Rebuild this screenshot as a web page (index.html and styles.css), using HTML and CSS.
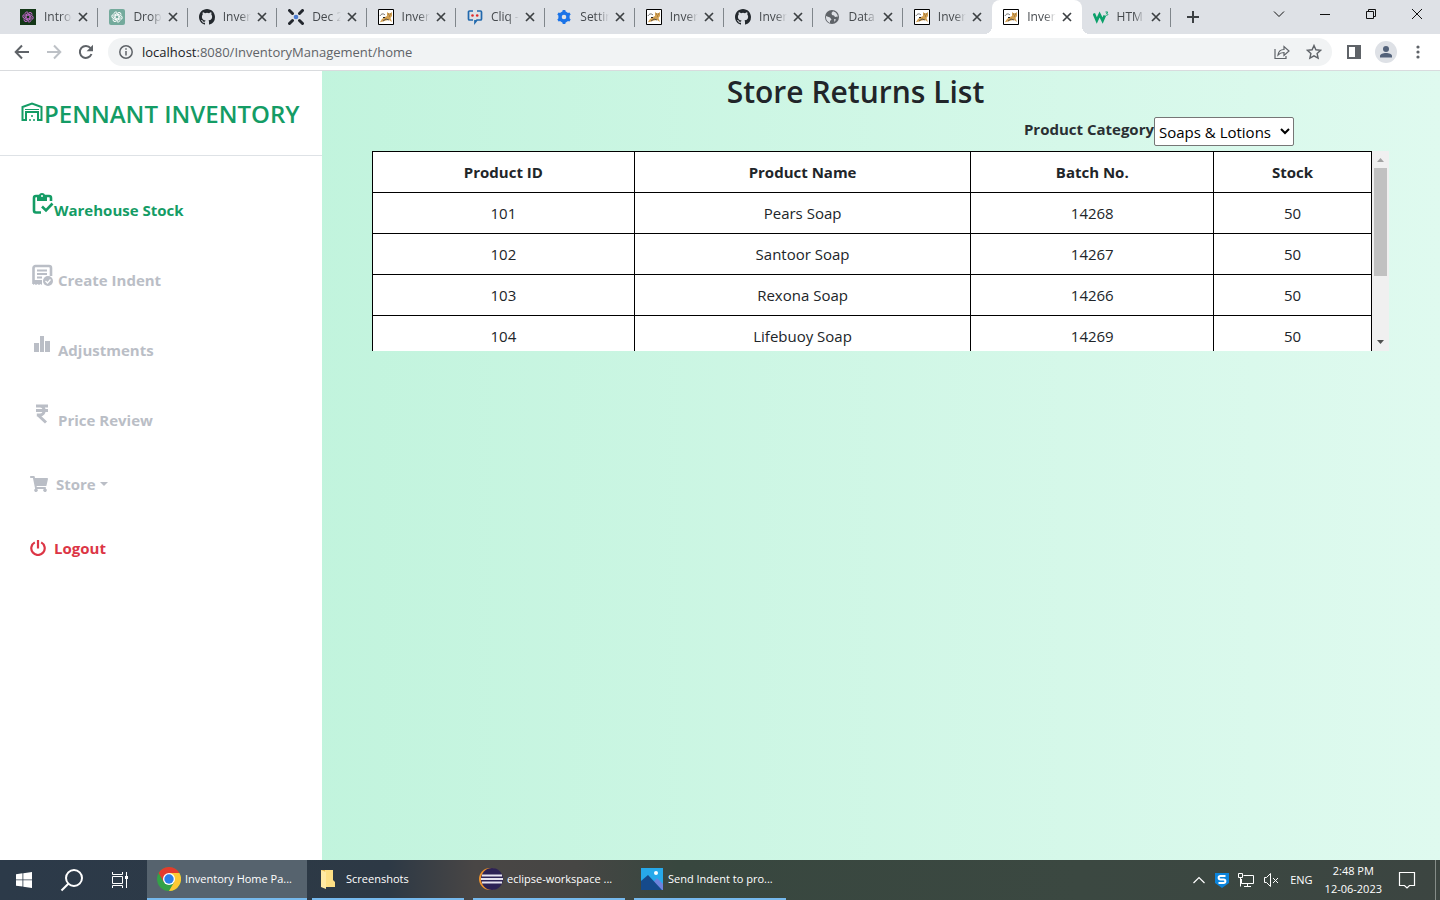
FILE: index.html
```html
<!DOCTYPE html>
<html lang="en">
<head>
<meta charset="utf-8">
<title>Inventory Home Page</title>
<link rel="stylesheet" href="styles.css">
</head>
<body>
<svg class="defs" aria-hidden="true">
  <symbol id="x" viewBox="0 0 10 10"><path d="M1 1l8 8M9 1l-8 8" fill="none" stroke="#3c4043" stroke-width="1.7"/></symbol>
  <symbol id="knot" viewBox="0 0 16 16"><g fill="none" stroke="currentColor" stroke-width="1.2"><path id="petal" d="M8 2.2C5.8 1 3.9 2.800 4.300 5v3.400l3.700 2.200"/><use href="#petal" transform="rotate(60 8 8)"/><use href="#petal" transform="rotate(120 8 8)"/><use href="#petal" transform="rotate(180 8 8)"/><use href="#petal" transform="rotate(240 8 8)"/><use href="#petal" transform="rotate(300 8 8)"/></g></symbol>
  <symbol id="github" viewBox="0 0 16 16"><path fill="#24292e" d="M8 0C3.580 0 0 3.580 0 8c0 3.540 2.290 6.530 5.470 7.590.4.070.55-.17.55-.38 0-.19-.01-.82-.01-1.490-2.010.37-2.530-.49-2.690-.94-.09-.23-.48-.94-.82-1.130-.28-.15-.68-.52-.01-.53.63-.01 1.080.58 1.230.82.72 1.210 1.870.87 2.330.66.070-.52.28-.87.51-1.070-1.780-.2-3.640-.89-3.640-3.950 0-.87.31-1.590.82-2.150-.08-.2-.36-1.020.08-2.120 0 0 .67-.21 2.200.82a7.600 7.600 0 014 0c1.530-1.040 2.200-.82 2.200-.82.44 1.100.16 1.920.08 2.120.51.56.82 1.270.82 2.150 0 3.070-1.870 3.750-3.650 3.950.29.25.54.73.54 1.480 0 1.070-.01 1.930-.01 2.200 0 .21.15.46.55.38A8 8 0 0016 8c0-4.420-3.580-8-8-8z"/></symbol>
  <symbol id="cat" viewBox="0 0 16 16"><path fill="#fff" stroke="#000" d="M.5.5h15v15H.5z"/><path d="M2 13l2-3 3-2 2-1 0-4 1.500 1.200h2L14 3v4l-1.500 2 1.500 4-3-2-3 .5-3 1-3 .8z" fill="#d2a052"/><path d="M2 7c1-2 3-3 5-1M5 12l3-2 3 1" fill="none" stroke="#444" stroke-width=".8"/><path d="M5 8h2v1H5z" fill="#222"/><path d="M10 5h1M12 5h1M11 7h1" stroke="#8a6430"/></symbol>
</svg>

<header class="browser">
  <div class="tabstrip">
    <div class="tabs">
      <div class="tab"><svg class="fav" viewBox="0 0 16 16"><path fill="#143718" d="M0 0h16v16H0z"/><use href="#knot" color="#c469cf" x="1.500" y="1.500" width="13" height="13"/></svg><span class="label">Introd</span><button class="close" aria-label="Close tab"><svg><use href="#x"/></svg></button></div>
      <div class="tab"><svg class="fav" viewBox="0 0 16 16"><rect width="16" height="16" rx="2" fill="#74aa9c"/><use href="#knot" color="#fff" x="1.500" y="1.500" width="13" height="13"/></svg><span class="label">Drop</span><button class="close" aria-label="Close tab"><svg><use href="#x"/></svg></button></div>
      <div class="tab"><svg class="fav"><use href="#github"/></svg><span class="label">Inver</span><button class="close" aria-label="Close tab"><svg><use href="#x"/></svg></button></div>
      <div class="tab"><svg class="fav" viewBox="0 0 16 16"><path d="M1.500 1.500l3 3M14.500 1.500l-3 3M1.500 14.500l3-3M14.500 14.500l-3-3" stroke="#23272e" stroke-width="3" stroke-linecap="round"/><circle cx="8" cy="8" r="2.300" fill="#4b7bd0"/></svg><span class="label">Dec 2</span><button class="close" aria-label="Close tab"><svg><use href="#x"/></svg></button></div>
      <div class="tab"><svg class="fav"><use href="#cat"/></svg><span class="label">Inver</span><button class="close" aria-label="Close tab"><svg><use href="#x"/></svg></button></div>
      <div class="tab"><svg class="fav" viewBox="0 0 16 16"><path d="M6 2H2.500a1 1 0 00-1 1v7a1 1 0 001 1H6M10 2h3.500a1 1 0 011 1v7a1 1 0 01-1 1H10l-2 2.500V11" fill="none" stroke="#2269ad" stroke-width="1.700"/><circle cx="5.500" cy="6.500" r="1.300" fill="#e02b2b"/><circle cx="10.200" cy="6.500" r="1.300" fill="#e02b2b"/></svg><span class="label">Cliq -</span><button class="close" aria-label="Close tab"><svg><use href="#x"/></svg></button></div>
      <div class="tab"><svg class="fav" viewBox="0 0 16 16"><circle cx="8" cy="8" r="4" fill="none" stroke="#1a73e8" stroke-width="3.400"/><path d="M6.700 1h2.600l.5 2.500H6.200zM6.700 15h2.600l.5-2.500H6.200zM1.300 5.600l1.300-2.200L5 4.200 3.200 7.300zM14.700 5.600l-1.300-2.200-2.400.8 1.800 3.100zM1.300 10.400l1.300 2.200 2.400-.8-1.800-3.100zM14.700 10.400l-1.300 2.200-2.400-.8 1.800-3.100z" fill="#1a73e8"/></svg><span class="label">Settin</span><button class="close" aria-label="Close tab"><svg><use href="#x"/></svg></button></div>
      <div class="tab"><svg class="fav"><use href="#cat"/></svg><span class="label">Inver</span><button class="close" aria-label="Close tab"><svg><use href="#x"/></svg></button></div>
      <div class="tab"><svg class="fav"><use href="#github"/></svg><span class="label">Inver</span><button class="close" aria-label="Close tab"><svg><use href="#x"/></svg></button></div>
      <div class="tab"><svg class="fav" viewBox="0 0 16 16"><circle cx="8" cy="8" r="7" fill="#5f6368"/><path d="M2 7l4 1.500 1.500 2L6 12v2C3.500 13 2 11 2 8.500zM9 2.200L7.500 4 8 6l2 .5 1 1.500 2.500-.5L13.800 9c.4-3-1.300-5.800-4.800-6.800zM10 10l2 .5-1.500 2.500z" fill="#dee1e6"/></svg><span class="label">Data</span><button class="close" aria-label="Close tab"><svg><use href="#x"/></svg></button></div>
      <div class="tab no-sep"><svg class="fav"><use href="#cat"/></svg><span class="label">Inver</span><button class="close" aria-label="Close tab"><svg><use href="#x"/></svg></button></div>
      <div class="tab active"><svg class="fav"><use href="#cat"/></svg><span class="label">Inver</span><button class="close" aria-label="Close tab"><svg><use href="#x"/></svg></button></div>
      <div class="tab"><svg class="fav" viewBox="0 0 16 16"><path d="M.8 4.500l3 7 2.800-6 3 6 2.200-5" fill="none" stroke="#0ba06a" stroke-width="2.700"/><path d="M12.500 3h2.200l-1.200 1.500c2.200 0 1.600 2.300-.8 1.700" fill="none" stroke="#0ba06a"/></svg><span class="label">HTM</span><button class="close" aria-label="Close tab"><svg><use href="#x"/></svg></button></div>
    </div>
    <button class="newtab" aria-label="New tab"><svg width="12" height="12" viewBox="0 0 12 12"><path d="M6 0v12M0 6h12" stroke="#3c4043" stroke-width="2"/></svg></button>
    <div class="winctl">
      <button aria-label="Search tabs"><svg width="12" height="12" viewBox="0 0 12 12"><path d="M1 3.500l5 5 5-5"/></svg></button>
      <button aria-label="Minimize"><svg width="12" height="12" viewBox="0 0 12 12"><path d="M1 6.500h10"/></svg></button>
      <button aria-label="Restore"><svg width="12" height="12" viewBox="0 0 12 12"><path d="M1.500 3.500h7v7h-7zM3.500 3.500v-2h7v7h-2"/></svg></button>
      <button aria-label="Close"><svg width="12" height="12" viewBox="0 0 12 12"><path d="M1 1l10 10M11 1L1 11"/></svg></button>
    </div>
  </div>
  <div class="toolbar">
    <button aria-label="Back"><svg viewBox="0 0 16 16"><path d="M15 8H2M8 1.500L1.700 8 8 14.500" fill="none" stroke="#5f6368" stroke-width="2"/></svg></button>
    <button aria-label="Forward"><svg viewBox="0 0 16 16"><path d="M1 8h13M8 1.500L14.300 8 8 14.500" fill="none" stroke="#bdc1c6" stroke-width="2"/></svg></button>
    <button aria-label="Reload"><svg viewBox="0 0 16 16"><path d="M13.500 10A6 6 0 1112.600 4.200" fill="none" stroke="#5f6368" stroke-width="2"/><path d="M15 .8v6.400H8.600z" fill="#5f6368"/></svg></button>
    <div class="omnibox">
      <svg class="ic14" viewBox="0 0 14 14"><circle cx="7" cy="7" r="6.200" fill="none" stroke="#5f6368" stroke-width="1.500"/><path d="M7 6v4.500M7 3.300v1.500" stroke="#5f6368" stroke-width="1.500"/></svg>
      <div class="url"><b>localhost</b>:8080/InventoryManagement/home</div>
      <button aria-label="Share"><svg viewBox="0 0 16 16"><path d="M1 5v9.500h11V12M4 11c.5-4 3-5.500 6-5.500V2.500L15 7l-5 4.500v-3c-3 0-4.500.8-6 2.500z" fill="none" stroke="#5f6368" stroke-width="1.200"/></svg></button>
      <button aria-label="Bookmark"><svg viewBox="0 0 16 16"><path d="M8 1.500l1.900 4.300 4.800.5-3.600 3.200 1 4.700L8 11.800l-4.100 2.400 1-4.700L1.300 6.300l4.800-.5z" fill="none" stroke="#5f6368" stroke-width="1.400"/></svg></button>
    </div>
    <button aria-label="Side panel"><svg viewBox="0 0 16 16"><path d="M1 1h14v14H1zM3 3v10h6V3z" fill="#5f6368" fill-rule="evenodd"/></svg></button>
    <button class="avatar" aria-label="Profile"><svg viewBox="0 0 22 22"><circle cx="11" cy="11" r="11" fill="#dee1e6"/><circle cx="11" cy="8" r="3" fill="#53627a"/><path d="M5 16.500v-1.500c0-4 12-4 12 0v1.500z" fill="#53627a"/></svg></button>
    <button aria-label="Menu"><svg viewBox="0 0 16 16" fill="#5f6368"><circle cx="8" cy="3" r="1.600"/><circle cx="8" cy="8" r="1.600"/><circle cx="8" cy="13" r="1.600"/></svg></button>
  </div>
</header>

<div class="app">
  <aside class="sidebar">
    <h1 class="brand"><svg width="24" height="24" viewBox="0 0 24 24" fill="none" stroke="currentColor" stroke-width="2"><path d="M2.500 18V5L12 1.500 21.500 5v13H18v-8H6v8z"/><path d="M5 7.500h14" stroke-width="1"/><path d="M11 14h2M9 18h2M13 18h2" stroke-width="1.500"/></svg>PENNANT INVENTORY</h1>
    <nav class="menu">
      <a href="#" class="item tall current"><svg class="ic24" viewBox="0 0 24 24"><path d="M11 20.500H6a2 2 0 01-2-2V6a2 2 0 012-2h13a2 2 0 012 2v3" fill="none" stroke="currentColor" stroke-width="2.600"/><path d="M7 4h2a3 3 0 016 0h2v5H7z" fill="currentColor"/><circle cx="12" cy="4" r="1" fill="#fff"/><path d="M12 14.500l4 4 6.500-7" fill="none" stroke="currentColor" stroke-width="2.600"/></svg>Warehouse Stock</a>
      <a href="#" class="item tall spaced"><svg class="ic24" viewBox="0 0 24 24"><path d="M3.500 22V6a2 2 0 012-2H19a2 2 0 012 2v8" fill="none" stroke="currentColor" stroke-width="2.600"/><path d="M7 8.500h10M7 12h10M7 15.500h5" stroke="currentColor" stroke-width="2"/><path d="M3 18h9v5l-1.500-1L9 23l-1.500-1L6 23l-1.500-1L3 23z" fill="currentColor"/><circle cx="18" cy="19" r="5" fill="currentColor"/><path d="M15.500 19l2 2 3-3.500" fill="none" stroke="#fff" stroke-width="1.300"/></svg>Create Indent</a>
      <a href="#" class="item tall spaced"><svg class="ic24" viewBox="0 0 24 24" fill="currentColor"><path d="M4 11h5v9H4zM10 4h4v16h-4zM15 9h5v11h-5z"/></svg>Adjustments</a>
      <a href="#" class="item tall spaced"><svg class="ic24" viewBox="0 0 24 24" fill="none" stroke="currentColor" stroke-width="3"><path d="M6 4h12M6 8.500h12M6 4h4c5.500 0 5.500 9 0 9H6.800M8 13l8 7.500"/></svg>Price Review</a>
      <a href="#" class="item"><svg width="18" height="16" viewBox="0 0 576 512" fill="currentColor"><path d="M528 301l47-208c4-15-8-29-23-29H159l-9-45C148 8 138 0 126 0H24C11 0 0 11 0 24v16c0 13 11 24 24 24h70l70 343a56 56 0 1067 9h210a56 56 0 1064-10l5-26c4-15-8-29-23-29H218l-7-32h294c11 0 21-8 23-18z"/></svg>Store<span class="caret"></span></a>
      <a href="#" class="item logout"><svg width="16" height="16" viewBox="0 0 16 16" fill="none" stroke="currentColor" stroke-width="2.200"><path d="M4.800 2.400a6.700 6.700 0 106.400 0M8 0v8.500"/></svg>Logout</a>
    </nav>
  </aside>
  <main class="content">
    <h2 class="title">Store Returns List</h2>
    <div class="filter">
      <label for="category">Product Category</label>
      <select id="category"><option>Soaps &amp; Lotions</option></select>
    </div>
    <div class="scroller">
      <div class="viewport">
        <table>
          <colgroup><col class="c-id"><col class="c-name"><col class="c-batch"><col class="c-stock"></colgroup>
          <thead><tr><th>Product ID</th><th>Product Name</th><th>Batch No.</th><th>Stock</th></tr></thead>
          <tbody>
            <tr><td>101</td><td>Pears Soap</td><td>14268</td><td>50</td></tr>
            <tr><td>102</td><td>Santoor Soap</td><td>14267</td><td>50</td></tr>
            <tr><td>103</td><td>Rexona Soap</td><td>14266</td><td>50</td></tr>
            <tr><td>104</td><td>Lifebuoy Soap</td><td>14269</td><td>50</td></tr>
          </tbody>
        </table>
      </div>
      <div class="bar" aria-hidden="true">
        <svg width="17" height="17" viewBox="0 0 17 17"><path d="M5 11h7L8.500 7z" fill="#a3a3a3"/></svg>
        <div class="track"><div class="thumb"></div></div>
        <svg width="17" height="17" viewBox="0 0 17 17"><path d="M5 6h7l-3.500 4z" fill="#505050"/></svg>
      </div>
    </div>
  </main>
</div>

<footer class="taskbar">
  <button class="sys" aria-label="Start"><svg width="16" height="16" viewBox="0 0 16 16" fill="#fff"><path d="M0 2.200L6.500 1.300v6.200H0zM7.300 1.200L16 0v7.500H7.300zM0 8.300h6.500v6.200L0 13.700zM7.300 8.300H16V16l-8.700-1.200z"/></svg></button>
  <button class="sys" aria-label="Search"><svg width="24" height="24" viewBox="0 0 24 24" fill="none" stroke="#fff" stroke-width="2"><circle cx="14" cy="10" r="8"/><path d="M8.300 15.700L1.500 22.500"/></svg></button>
  <button class="sys" aria-label="Task view"><svg width="16" height="16" viewBox="0 0 16 16" fill="none" stroke="#fff"><path d="M.5 0v2.500h10V0M.5 4.500h10v7H.5zM.5 16v-2.500h10V16M14.500 0v16"/><path d="M13 4h3v3h-3z" fill="#fff" stroke="none"/></svg></button>
  <button class="task on"><svg width="24" height="24" viewBox="0 0 24 24"><circle cx="12" cy="12" r="12" fill="#34a147"/><path d="M1.600 6A12 12 0 0122.400 6H12z" fill="#e33b2e"/><path d="M1.600 6L6.800 15 12 12V6z" fill="#e33b2e"/><path d="M22.400 6A12 12 0 0112 24l5.200-9L12 6z" fill="#fcc934"/><circle cx="12" cy="12" r="6" fill="#fff"/><circle cx="12" cy="12" r="4.700" fill="#2a7de9"/></svg><span>Inventory Home Pa...</span></button>
  <button class="task folder"><svg width="16" height="20" viewBox="0 0 16 20"><path d="M1 1h10v17H1z" fill="#e8b84a"/><path d="M5 1h8v10l2 2v5H5z" fill="#fddf85"/><path d="M1 1l5 2v17l-5-2z" fill="#ffe9a3"/></svg><span>Screenshots</span></button>
  <button class="task"><svg width="24" height="24" viewBox="0 0 24 24"><circle cx="11" cy="12" r="11" fill="#f0942d"/><circle cx="13" cy="12" r="11" fill="#2c2255"/><path d="M3 8.500h20M2 12h22M3 15.500h20" stroke="#e6e3f0" stroke-width="1.800"/></svg><span>eclipse-workspace ...</span></button>
  <button class="task"><svg width="24" height="24" viewBox="0 0 24 24"><path fill="#27a9ea" d="M1 1h22v22H1z"/><path d="M11 18l6-7 6 6v6H11z" fill="#6d83dc"/><path d="M1 14l7-6 14 15H1z" fill="#154a8b"/><circle cx="16" cy="6" r="2" fill="#fff"/></svg><span>Send Indent to pro...</span></button>
  <div class="tray">
    <svg width="14" height="14" viewBox="0 0 14 14" fill="none" stroke="#fff" stroke-width="1.200"><path d="M1.500 10L7 4.500l5.500 5.500"/></svg>
    <svg width="14" height="16" viewBox="0 0 14 16"><path d="M0 1h14v10l-7 5-7-5z" fill="#0b84dc"/><path d="M10.500 4H5.500c-2.500 0-2.500 3.500 0 3.500h3c2.500 0 2.500 3.500 0 3.500h-5" fill="none" stroke="#fff" stroke-width="2"/></svg>
    <svg width="16" height="16" viewBox="0 0 16 16" fill="none" stroke="#fff"><path d="M5.500 3.500h10v8h-12V7M.5 1.500h4v4h-4zM2.500 5.500v9M9.500 11.500v3M6 14.500h7"/></svg>
    <svg width="16" height="16" viewBox="0 0 16 16" fill="none" stroke="#fff"><path d="M1.500 5.500h2l4-4v13l-4-4h-2zM10 6l5 5M15 6l-5 5"/></svg>
    <span class="lang">ENG</span>
    <div class="clock"><span>2:48 PM</span><span>12-06-2023</span></div>
    <svg width="18" height="18" viewBox="0 0 18 18" fill="none" stroke="#fff" stroke-width="1.200"><path d="M1.500 1.500h15v13h-5L9 17l-2.500-2.500h-5z"/></svg>
    <span class="peek"></span>
  </div>
</footer>
</body>
</html>
```
FILE: styles.css
```css
* { box-sizing: border-box; }
body {
  margin: 0;
  height: 100vh;
  display: flex;
  flex-direction: column;
  overflow: hidden;
  font: 15px/24px "Open Sans", "Noto Sans", sans-serif;
  color: #212529;
}
button { font: inherit; color: inherit; border: 0; background: none; padding: 0; display: flex; align-items: center; justify-content: center; }
svg { display: block; flex: none; }
.defs { position: absolute; width: 0; height: 0; }

/* Browser frame */
.tabstrip { display: flex; height: 34px; background: #dee1e6; padding-left: 9px; }
.tabs { display: grid; grid-template-columns: repeat(13, minmax(0, 1fr)); flex: 0 1 1162px; min-width: 0; }
.tab { position: relative; display: flex; align-items: center; gap: 8px; min-width: 0; padding: 0 10px 0 11px; font-size: 12px; color: #45494d; }
.tab:not(.active):not(.no-sep)::after { content: ""; position: absolute; right: 0; top: 8px; width: 1px; height: 19px; background: #80868b; }
.tab.active { background: #fff; border-radius: 8px 8px 0 0; }
.tab.active::before, .tab.active::after { content: ""; position: absolute; bottom: 0; width: 8px; height: 8px; }
.tab.active::before { left: -8px; background: radial-gradient(circle at 0 0, transparent 8px, #fff 8px); }
.tab.active::after { right: -8px; background: radial-gradient(circle at 100% 0, transparent 8px, #fff 8px); }
.fav { width: 16px; height: 16px; }
.label { flex: 1; min-width: 0; margin-right: -2px; overflow: hidden; white-space: nowrap; -webkit-mask-image: linear-gradient(to right, #000 60%, transparent); mask-image: linear-gradient(to right, #000 60%, transparent); }
.close, .close svg { flex: none; width: 10px; height: 10px; }
.newtab { width: 44px; }
.winctl { display: flex; margin-left: auto; height: 28px; }
.winctl button { width: 46px; }
.winctl svg { fill: none; stroke: #111; stroke-width: 1; }
.toolbar { display: flex; align-items: center; gap: 16px; height: 37px; padding: 0 14px; background: #fff; border-bottom: 1px solid #d9dbde; }
.toolbar button svg { width: 16px; height: 16px; }
.omnibox { flex: 1; display: flex; align-items: center; height: 28px; padding: 0 10px 0 11px; border-radius: 14px; background: #f1f3f4; gap: 16px; margin: 0 -2px; }
.ic14 { width: 14px; height: 14px; }
.url { flex: 1; margin-left: -7px; font-size: 13px; color: #5f6368; }
.url b { font-weight: 400; color: #202124; }
.avatar { margin: 0 -3px; }
.toolbar .avatar svg { width: 22px; height: 22px; }

/* Application */
.app { flex: 1; min-height: 0; display: flex; background: linear-gradient(to right, #b9f2d8, #dffaef); }
.sidebar { flex: 0 0 322px; background: #fff; }
.brand { display: flex; align-items: center; margin: 0; padding: 2px 20px 0; height: 85px; border-bottom: 1px solid #dee2e6; font-size: 24px; line-height: 32px; font-weight: 600; color: #149c65; white-space: nowrap; }
.menu { display: flex; flex-direction: column; gap: 40px; padding: 36px 30px; }
.item { display: flex; align-items: center; gap: 8px; color: #babec6; font-weight: 700; text-decoration: none; }
.tall { height: 30px; gap: 0; align-items: flex-end; }
.spaced { gap: 4px; }
.tall .ic24 { align-self: flex-start; }
.ic24 { width: 24px; height: 24px; }
.current { color: #149c65; }
.logout { color: #dc3545; }
.caret { border: 4px solid transparent; border-top-color: currentColor; border-bottom: 0; margin-left: -4px; }
.content { flex: 1; min-width: 0; padding: 0 51px 0 50px; }
.title { margin: 0; padding-right: 50px; text-align: center; font-size: 30px; line-height: 42px; font-weight: 600; }
.filter { display: flex; justify-content: flex-end; padding: 4px 95px 5px 0; }
.filter label { font-weight: 700; color: #2a2f33; }
.filter select { width: 140px; height: 29px; padding: 0; border: 1px solid #767676; border-radius: 2px; background: #fff; font: inherit; color: #000; }
.scroller { display: flex; height: 200px; }
.viewport { flex: 1; min-width: 0; overflow: hidden; }
table { width: 100%; table-layout: fixed; border-collapse: collapse; background: #fff; text-align: center; }
th, td { height: 41px; padding: 8px; border: 1px solid #000; }
.c-id { width: 26.2%; }
.c-name { width: 33.7%; }
.c-batch { width: 24.3%; }
.c-stock { width: 15.8%; }
.bar { display: flex; flex-direction: column; width: 17px; background: #f0f0f0; }
.track { flex: 1; padding: 0 2px; }
.thumb { height: 108px; background: #c1c1c1; }

/* Desktop taskbar */
.taskbar { display: flex; height: 40px; font-size: 11px; line-height: 18px; color: #fff; background: linear-gradient(to right, #2c3a49 0, #2d3945 27%, #494645 33%, #464644 40%, #38473f 47%, #3b4841 75%, #3c4541); }
.sys { width: 48px; }
.task { justify-content: flex-start; width: 152px; margin-right: 9px; padding: 0 6px; gap: 4px; border-bottom: 2px solid #76b9ed; white-space: nowrap; }
.task.on { width: 160px; margin: 0 5px 0 3px; padding: 0 10px; background: #56636e; }
.folder { padding: 0 8px; gap: 10px; }
.tray { margin-left: auto; display: flex; align-items: center; gap: 8px; }
.tray > svg { margin-right: 1px; }
.lang { margin: 0 4px 0 2px; }
.clock { display: flex; flex-direction: column; align-items: center; margin-right: 8px; }
.peek { width: 5px; height: 40px; margin-left: 10px; border-left: 1px solid #858c88; }
```
